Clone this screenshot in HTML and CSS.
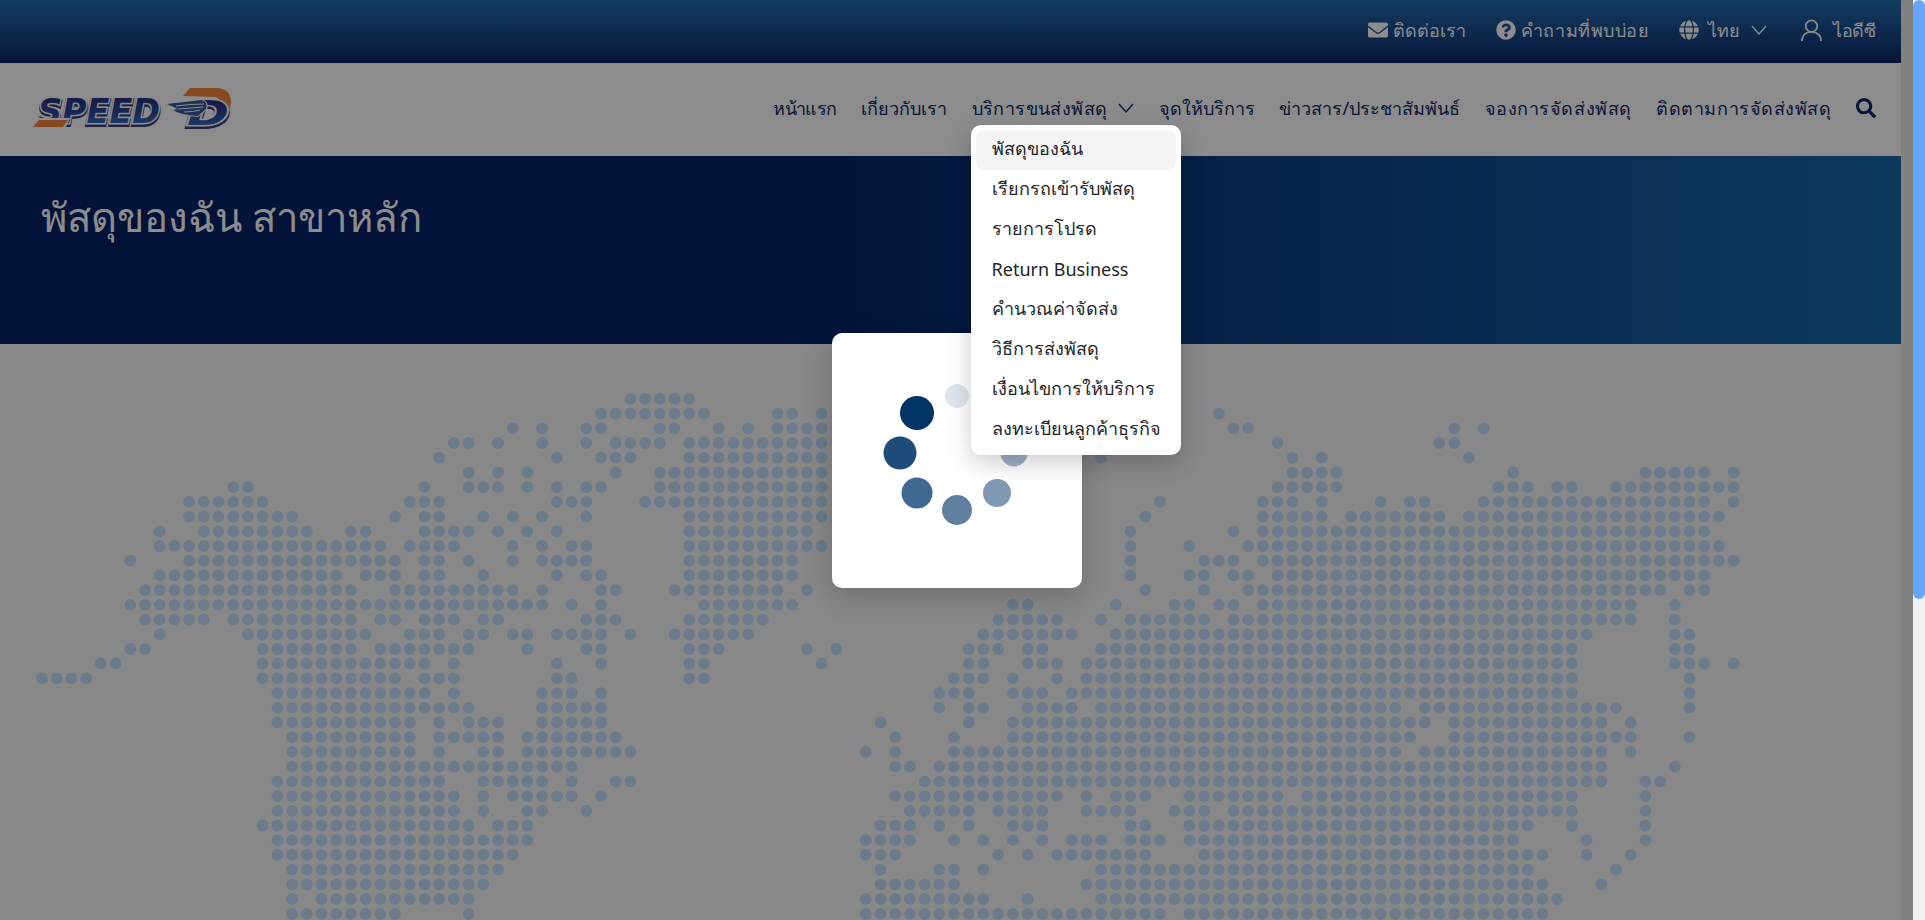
FILE: index.html
```html
<!DOCTYPE html>
<html lang="th">
<head>
  <meta charset="UTF-8">
  <title>พัสดุของฉัน สาขาหลัก</title>
  <link rel="stylesheet" href="styles.css">
</head>
<body>

  <div class="page">
    <div class="topbar">
      <a class="top-link">
        <svg class="ic-mail" viewBox="0 0 512 512"><path d="M502.3 190.8c3.9-3.1 9.7-.2 9.7 4.7V400c0 26.5-21.5 48-48 48H48c-26.5 0-48-21.5-48-48V195.6c0-5 5.7-7.8 9.7-4.7 22.4 17.4 52.1 39.5 154.1 113.6 21.1 15.4 56.7 47.8 92.2 47.6 35.7.3 72-32.8 92.3-47.6 102-74.1 131.6-96.3 154-113.7zM256 320c23.2.4 56.6-29.2 73.4-41.4 132.7-96.3 142.8-104.7 173.4-128.7 5.8-4.5 9.2-11.5 9.2-18.9v-19c0-26.5-21.5-48-48-48H48C21.5 64 0 85.5 0 112v19c0 7.4 3.4 14.3 9.2 18.9 30.6 23.9 40.7 32.4 173.4 128.7 16.8 12.2 50.2 41.8 73.4 41.4z"/></svg>
        ติดต่อเรา
      </a>
      <a class="top-link ls-w">
        <svg class="ic-round" viewBox="0 0 512 512"><path d="M504 256c0 136.997-111.043 248-248 248S8 392.997 8 256C8 119.083 119.043 8 256 8s248 111.083 248 248zM262.655 90c-54.497 0-89.255 22.957-116.549 63.758-3.536 5.286-2.353 12.415 2.715 16.258l34.699 26.31c5.205 3.947 12.621 3.008 16.665-2.122 17.864-22.658 30.113-35.797 57.303-35.797 20.429 0 45.698 13.148 45.698 32.958 0 14.976-12.363 22.667-32.534 33.976C247.128 238.528 216 254.941 216 296v4c0 6.627 5.373 12 12 12h56c6.627 0 12-5.373 12-12v-1.333c0-28.462 83.186-29.647 83.186-106.667 0-58.002-60.165-102-116.531-102zM256 338c-25.365 0-46 20.635-46 46 0 25.364 20.635 46 46 46s46-20.636 46-46c0-25.365-20.635-46-46-46z"/></svg>
        คำถามที่พบบ่อย
      </a>
      <a class="top-link">
        <svg class="ic-round ic-globe" viewBox="0 0 496 512"><path d="M336.5 160C322 70.7 287.8 8 248 8s-74 62.7-88.5 152h177zM152 256c0 22.2 1.2 43.5 3.3 64h185.3c2.1-20.5 3.3-41.8 3.3-64s-1.2-43.5-3.3-64H155.3c-2.1 20.5-3.3 41.8-3.3 64zm324.7-96c-28.6-67.9-86.5-120.4-158-141.6 24.4 33.8 41.2 84.7 50 141.6h108zM177.2 18.4C105.8 39.6 47.8 92.1 19.3 160h108c8.7-56.9 25.5-107.8 49.9-141.6zM487.4 192H372.7c2.1 21 3.3 42.5 3.3 64s-1.2 43-3.3 64h114.6c5.5-20.5 8.6-41.8 8.6-64s-3.1-43.5-8.5-64zM120 256c0-21.5 1.2-43 3.3-64H8.6C3.2 212.5 0 233.8 0 256s3.2 43.5 8.6 64h114.6c-2-21-3.2-42.5-3.2-64zm39.5 96c14.5 89.3 48.7 152 88.5 152s74-62.7 88.5-152h-177zm159.3 141.6c71.4-21.2 129.4-73.7 158-141.6h-108c-8.8 56.9-25.6 107.8-50 141.6zM19.3 352c28.6 67.9 86.5 120.4 158 141.6-24.4-33.8-41.2-84.7-50-141.6h-108z"/></svg>
        ไทย
        <svg class="ic-chev" viewBox="0 0 16 10"><polyline points="1,1 8,9 15,1"/></svg>
      </a>
      <a class="top-link top-user ls-n">
        <svg class="ic-user" viewBox="0 0 22 24"><circle cx="11" cy="7.5" r="6"/><path d="M1 23c0-6 4-9.5 10-9.5s10 3.5 10 9.5"/></svg>
        ไอดีซี
      </a>
    </div>

    <div class="header">
      <svg class="logo" viewBox="0 0 202 46">
        <defs>
          <linearGradient id="blue" x1="0" y1="0" x2="0" y2="1">
            <stop offset="0.15" stop-color="#2a2f7e"/>
            <stop offset="0.55" stop-color="#2a4a9a"/>
            <stop offset="1" stop-color="#3a86cf"/>
          </linearGradient>
        </defs>
        <text class="logo-shade" x="8" y="38" textLength="122" lengthAdjust="spacingAndGlyphs">SPEED</text>
        <text class="logo-shade" x="157" y="40" textLength="42" lengthAdjust="spacingAndGlyphs">D</text>
        <text class="logo-text" x="8" y="36" textLength="122" lengthAdjust="spacingAndGlyphs">SPEED</text>
        <path class="logo-back" d="M0 42 L7 31 H40 L35 42 Z"/>
        <path class="logo-orange" d="M3 40 L9 33 H38 L33 40 Z"/>
        <path class="logo-orange" d="M153 9 L160 1 H188 Q200 2 201 14 Q201 20 198 26 Q195 15 186 10 Z"/>
        <text class="logo-text" x="157" y="38" textLength="42" lengthAdjust="spacingAndGlyphs">D</text>
        <path class="logo-back" d="M135 16 L172 12 Q180 15 177 23 L168 30 Q150 29 142 23 L146 21 Z"/>
        <path class="logo-wing" d="M137 17 L172 13 Q178 15 176 22 L168 29 Q150 28 143 23 L148 22 Z"/>
        <path class="logo-feather" d="M146 19 Q160 17 174 17 M148 22 Q160 21 173 20 M154 25 Q163 25 170 23"/>
      </svg>

      <ul class="nav">
        <li class="ls-n">หน้าแรก</li>
        <li>เกี่ยวกับเรา</li>
        <li class="has-menu ls-p">
          บริการขนส่งพัสดุ
          <svg class="ic-chev" viewBox="0 0 16 10"><polyline points="1,1 8,9 15,1"/></svg>
          <ul class="menu">
            <li class="active">พัสดุของฉัน</li>
            <li>เรียกรถเข้ารับพัสดุ</li>
            <li>รายการโปรด</li>
            <li>Return Business</li>
            <li>คำนวณค่าจัดส่ง</li>
            <li>วิธีการส่งพัสดุ</li>
            <li>เงื่อนไขการให้บริการ</li>
            <li>ลงทะเบียนลูกค้าธุรกิจ</li>
          </ul>
        </li>
        <li>จุดให้บริการ</li>
        <li>ข่าวสาร/ประชาสัมพันธ์</li>
        <li class="ls-w">จองการจัดส่งพัสดุ</li>
        <li class="ls-w">ติดตามการจัดส่งพัสดุ</li>
        <li class="nav-search">
          <svg viewBox="0 0 512 512"><path d="M505 442.7L405.3 343c-4.5-4.5-10.6-7-17-7H372c27.6-35.3 44-79.7 44-128C416 93.1 322.9 0 208 0S0 93.1 0 208s93.1 208 208 208c48.3 0 92.7-16.4 128-44v16.3c0 6.4 2.5 12.5 7 17l99.7 99.7c9.4 9.4 24.6 9.4 33.9 0l28.3-28.3c9.4-9.4 9.4-24.6.1-34zM208 336c-70.7 0-128-57.2-128-128 0-70.7 57.2-128 128-128 70.7 0 128 57.2 128 128 0 70.7-57.2 128-128 128z"/></svg>
        </li>
      </ul>
    </div>

    <div class="hero">
      <h1>พัสดุของฉัน สาขาหลัก</h1>
    </div>

    <div class="map-area">
      <svg id="worldMap" class="world-map" viewBox="0 0 1901 576"></svg>
    </div>

    <div class="overlay"></div>

    <div class="loader">
      <svg class="spinner" viewBox="0 0 140 140" width="140" height="140">
        <circle cx="70" cy="13" r="12" fill="#dfe5ec"/>
        <circle cx="30" cy="30" r="17" fill="#003366"/>
        <circle cx="13" cy="70" r="16.5" fill="#204c7a"/>
        <circle cx="30" cy="110" r="15.5" fill="#406890"/>
        <circle cx="70" cy="127" r="15" fill="#6080a2"/>
        <circle cx="110" cy="110" r="14" fill="#809ab5"/>
        <circle cx="127" cy="70" r="13.5" fill="#9fb2c7"/>
        <circle cx="110" cy="30" r="12.5" fill="#bfccd9"/>
      </svg>
    </div>
  </div>

  <div class="side-track"></div>
  <div class="scrollbar"><div class="scroll-thumb"></div></div>

  <script src="map.js"></script>
</body>
</html>
```

FILE: styles.css
```css
* {
  box-sizing: border-box;
}
html, body {
  margin: 0;
  height: 920px;
  overflow: hidden;
}
body {
  display: flex;
  font-family: "Noto Sans", "Open Sans", sans-serif;
  background: #f7f7f7;
}
ul {
  list-style: none;
  margin: 0;
  padding: 0;
}
.ls-n {
  letter-spacing: -.6px;
}
.ls-p {
  letter-spacing: .4px;
}
.ls-w {
  letter-spacing: .55px;
}

.page {
  position: relative;
  width: 1901px;
  height: 920px;
  flex: none;
}
.overlay {
  position: absolute;
  inset: 0;
  z-index: 10;
  background: rgba(0, 0, 0, .45);
}

.topbar {
  height: 63px;
  display: flex;
  justify-content: flex-end;
  align-items: center;
  gap: 30px;
  padding: 0 26px 3px 0;
  background: linear-gradient(#246fb0, #0b2869);
  color: #fff;
  font-size: 18px;
}
.top-link {
  display: flex;
  align-items: center;
  gap: 5px;
  fill: #fff;
}
.top-link .ic-chev {
  margin-left: 6px;
}
.top-user {
  margin-left: 4px;
}
.ic-mail {
  width: 20px;
  height: 20px;
}
.ic-round {
  width: 20px;
  height: 20px;
}
.ic-globe {
  margin-right: 4px;
}
.ic-chev {
  width: 16px;
  height: 10px;
  margin-left: 11px;
  fill: none;
  stroke: currentColor;
  stroke-width: 1.4;
}
.ic-user {
  width: 21px;
  height: 23px;
  margin-right: 6px;
  fill: none;
  stroke: #fff;
  stroke-width: 1.8;
}

.header {
  height: 93px;
  display: flex;
  justify-content: space-between;
  align-items: center;
  padding: 0 25px 0 30px;
  background: #fff;
}
.logo {
  width: 202px;
  height: 46px;
  overflow: visible;
}
.logo-text,
.logo-shade {
  font-family: "DejaVu Sans", sans-serif;
  font-size: 34px;
  font-weight: 700;
  font-style: italic;
}
.logo-text {
  fill: url(#blue);
  stroke: #fff;
  stroke-width: 3px;
  paint-order: stroke;
}
.logo-shade {
  fill: #3c3c78;
  stroke: #3c3c78;
  stroke-width: 4px;
}
.logo-orange {
  fill: #f5853c;
}
.logo-back {
  fill: #fff;
}
.logo-wing {
  fill: #3a5a9c;
}
.logo-feather {
  fill: none;
  stroke: #fff;
  stroke-width: 1;
}

.nav {
  display: flex;
  align-items: center;
  gap: 24.5px;
  margin-bottom: 3px;
  color: #0b2869;
  font-size: 18px;
}
.has-menu {
  position: relative;
  display: flex;
  align-items: center;
}
.nav-search svg {
  display: block;
  width: 20px;
  height: 20px;
  fill: #0b2869;
}
.menu {
  position: absolute;
  top: 31px;
  left: -1px;
  z-index: 20;
  width: 210px;
  padding: 5px;
  background: #fff;
  border-radius: 10px;
  box-shadow: 0 8px 24px rgba(0, 0, 0, .2);
  color: #212529;
  font-size: 18px;
  letter-spacing: 0;
}
.menu li {
  height: 40px;
  padding: 0 16px 2px;
  display: flex;
  align-items: center;
  white-space: nowrap;
  border-radius: 8px;
}
.menu .active {
  background: #f4f4f4;
}

.hero {
  height: 188px;
  padding: 31px 41px;
  background: linear-gradient(90deg, #042166 40%, #1969ab);
  color: #fff;
}
.hero h1 {
  margin: 0;
  font-size: 40px;
  font-weight: 500;
  line-height: 60px;
}

.map-area {
  height: 576px;
  background: #f7f7f7;
}
.world-map {
  display: block;
  width: 1901px;
  height: 576px;
}
.world-map circle {
  fill: #c4e1ff;
}

.loader {
  position: absolute;
  left: 832px;
  top: 333px;
  z-index: 15;
  width: 250px;
  height: 255px;
  padding-top: 50px;
  display: flex;
  justify-content: center;
  align-items: flex-start;
  background: #fff;
  border-radius: 10px;
  box-shadow: 0 8px 30px rgba(0, 0, 0, .2);
}
.spinner {
  overflow: visible;
}

.side-track {
  width: 12px;
  height: 920px;
  flex: none;
  background: #7f8281;
}
.scrollbar {
  width: 12px;
  height: 920px;
  flex: none;
  background: #f1f1f1;
}
.scroll-thumb {
  height: 599px;
  background: #66a6ff;
  border-radius: 6px;
}
```

FILE: map.js
```js
// dot map: one entry per row, column numbers and ranges
const rows = [
  "40-44",
  "38-45,50,51,53,80",
  "32,34,37,38,42,43,46,48,50-53,81,82,96,98",
  "28,29,31,34,37,39-42,44-53,84,95,96",
  "27,35,38-40,44-53,72,85,87,97",
  "29,31,33,39,42-53,85-88,100,109-113,115",
  "13,14,26,29-31,33,35,37,38,42-53,84-88,99-101,103,104,107-115",
  "10-15,25-27,35-37,41-53,76,83-85,87,91,93,94,98-113,115",
  "10-17,24,26,27,30,32,34,37,44-53,75,83-87,89-95,97-114",
  "8,11-18,21,22,26-29,31,33,35,44-52,74,81,83-113",
  "8-23,25-28,32,34,36,37,44-53,74,78,82-114",
  "6,10-24,26,27,29,32,34-37,44-51,74,79-81,83-115",
  "8-20,22-24,26,27,30,35,37,38,44-51,74,78,79,81,82,84-113",
  "7-21,24-32,34,38,39,43-50,52,75,79,82-110,112,113",
  "6-34,36,38,45-51,66,67,73,77,78,80,81,83-108,111",
  "7-11,13-21,23,24,26-28,30,31,37-39,44-49,65-69,72,74-79,81-108,111",
  "8,14-22,25-27,29,30,32,33,35-38,40,43-48,64-70,73-105,111,112",
  "6,7,15-21,23-29,33,37,38,44-46,52,54,63-65,67,68,72-104,111,112",
  "4,5,15-26,28,35,38,44,45,53,63,64,67-69,71-104,111-113,115",
  "0-3,15-24,26-28,35,36,44,45,62-64,66,69,71-104,112",
  "16-26,28,34-36,38,61-63,66-68,70-104,112",
  "16-29,34-38,61,63,64,67-70,72-92,94-107,112",
  "16-25,27,29-31,34-38,57,63,66-94,96-106,108",
  "17-25,27-31,33-39,58,62,66-93,96-108,112",
  "17-25,27,30,31,33-40,56,58,62-92,94-106,108",
  "17-36,58,59,61-106,111",
  "16-27,30-34,36,39,40,60-106,109,110",
  "16-28,30,32-36,38,58-69,71,73-75,78-84,86-104,109",
  "16-28,30,33,34,37,59-63,65-68,71-74,77-79,81-104,109",
  "15-29,31-33,57-59,61,63,66-68,74,75,78-101,104,109",
  "16-33,56-59,62,64,66,68,70-72,74-76,78-100,105,109",
  "16-32,56-58,65,67,69-75,79-102,105,108",
  "17-31,57,61,62,64,72-101,107",
  "17-30,57-62,71-102,106",
  "17,19-29,56-64,67,72-103",
  "17-24,29,56-76,78-102"
];

const map = document.getElementById("worldMap");
const STEP_X = 14.71;
const STEP_Y = 14.71;
let dots = "";

rows.forEach((row, r) => {
  row.split(",").forEach(part => {
    const [from, to] = part.split("-").map(Number);
    for (let k = from; k <= (to === undefined ? from : to); k++) {
      dots += `<circle cx="${(42 + k * STEP_X).toFixed(1)}" cy="${(54.9 + r * STEP_Y).toFixed(1)}" r="5.9"/>`;
    }
  });
});

map.innerHTML = dots;
```
